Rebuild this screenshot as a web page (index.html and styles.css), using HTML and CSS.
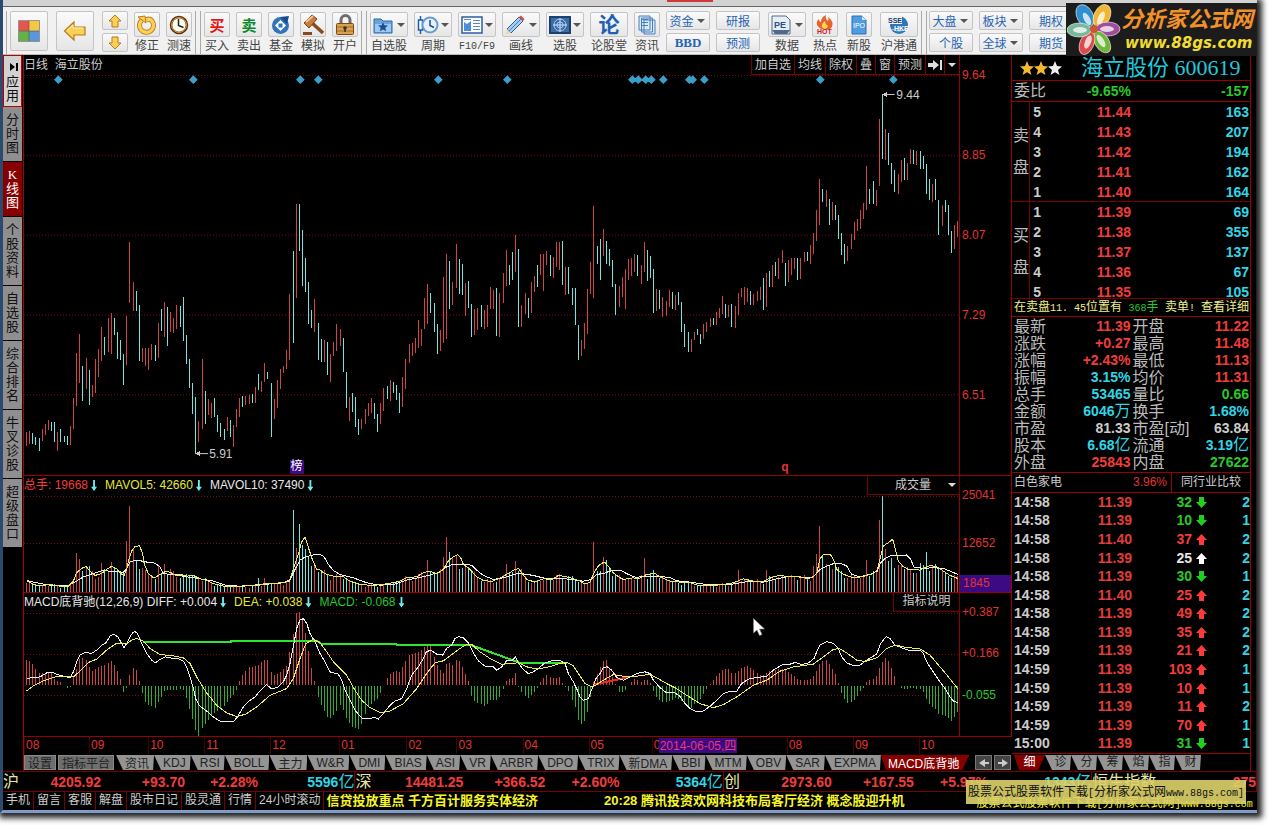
FILE: index.html
```html
<!DOCTYPE html>
<html lang="zh-CN">
<head>
<meta charset="utf-8">
<title>海立股份 600619</title>
<link rel="stylesheet" href="styles.css">
</head>
<body>
<div class="app">
<div class="titlestrip"><span class="redchip"></span></div>
<header class="toolbar">
  <div class="tgroup">
    <button class="big" aria-label="首页"><svg width="22" height="22" viewBox="0 0 22 22"><path fill="#e8554e" d="M1 1h10v10H1z"/><path fill="#f5c842" d="M11 1h10v10H11z"/><path fill="#62b246" d="M1 11h10v10H1z"/><path fill="#5a96dc" d="M11 11h10v10H11z"/><path fill="none" stroke="#555" stroke-opacity=".6" d="M.5 .5h21v21H.5zM11 1v20M1 11h20"/></svg></button>
    <button class="big" aria-label="返回"><svg width="24" height="22" viewBox="0 0 24 22"><path fill="#fbd056" stroke="#b9791c" stroke-width="1.2" d="M1.5 11 11 2v5h11v8H11v5z"/><path fill="none" stroke="#fff0b0" d="M4 10.500 10 5v3h10"/></svg></button>
    <div class="pair narrow">
      <button aria-label="上"><svg width="14" height="14" viewBox="0 0 14 14"><path fill="#fbd056" stroke="#b9791c" d="M7 1l6 6H10v6H4V7H1z"/></svg></button>
      <button aria-label="下"><svg width="14" height="14" viewBox="0 0 14 14"><path fill="#fbd056" stroke="#b9791c" d="M7 13l6-6H10V1H4v6H1z"/></svg></button>
    </div>
    <div class="tool"><button aria-labelledby="l1"><svg width="20" height="20" viewBox="0 0 20 20"><path fill="none" stroke="#b9791c" stroke-width="5" d="M5 5A7 7 0 1 0 15 6Q13 3 9 5"/><path fill="none" stroke="#fbd056" stroke-width="3.400" d="M5 5A7 7 0 1 0 15 6Q13 3 9 5"/><path fill="#fbd056" stroke="#b9791c" d="M1 2l7-1 1 7z"/></svg></button><span id="l1">修正</span></div>
    <div class="tool"><button aria-labelledby="l2"><svg width="20" height="20" viewBox="0 0 20 20"><circle cx="10" cy="10" r="8" fill="#fffdf2" stroke="#5a2f16" stroke-width="2.500"/><circle cx="10" cy="10" r="7.500" fill="none" stroke="#d8963a"/><path fill="none" stroke="#222" stroke-width="1.500" d="M9.500 4v6.500l5 2"/></svg></button><span id="l2">测速</span></div>
  </div>
  <div class="tgroup">
    <div class="tool"><button aria-labelledby="l3"><b class="buy">买</b></button><span id="l3">买入</span></div>
    <div class="tool"><button aria-labelledby="l4"><b class="sell">卖</b></button><span id="l4">卖出</span></div>
    <div class="tool"><button aria-labelledby="l5"><svg width="20" height="20" viewBox="0 0 20 20"><circle cx="9.500" cy="10.500" r="8.500" fill="#2f74bb"/><path fill="#174d8c" d="M9 2l9-1-2 8z"/><path fill="#fff" d="M9.500 5 15 10.500 9.500 16 4 10.500z"/><path fill="#2f74bb" d="M7.500 8.500h4v4h-4z"/></svg></button><span id="l5">基金</span></div>
    <div class="tool"><button aria-labelledby="l6"><svg width="22" height="22" viewBox="0 0 22 22"><path stroke="#8a4a20" stroke-width="3.500" d="M10 9l11 10"/><path fill="#c97c3c" stroke="#7c3d16" d="M2 9 10 1l5 4-8 9z"/><path stroke="#f0c79a" stroke-width="2" d="M4 8l7-6"/><path fill="#8a4a20" d="M1 18h9v3H1z"/></svg></button><span id="l6">模拟</span></div>
    <div class="tool"><button aria-labelledby="l7"><svg width="20" height="22" viewBox="0 0 20 22"><path fill="none" stroke="#6e6e6e" stroke-width="3" d="M6 10V6a4 4 0 0 1 9 0v5"/><rect x="1.500" y="9.500" width="17" height="11" rx="1" fill="#d9a050" stroke="#7a4a12"/><path stroke="#a66b25" d="M2 13h16M2 17h16"/><circle cx="10" cy="14" r="1.800" fill="#332"/><path stroke="#332" stroke-width="1.500" d="M10 14v4"/></svg></button><span id="l7">开户</span></div>
  </div>
  <div class="tgroup">
    <div class="tool split"><button aria-labelledby="l8"><svg width="20" height="18" viewBox="0 0 20 18"><path fill="#6aa5e0" stroke="#2c68ad" d="M1 3h7l2 2h9v12H1z"/><path fill="#9cc8f2" d="M2 8h16v8H2z"/><path fill="#1d4f8e" d="M10 6l1.400 3.200 3.600.3-2.700 2.300.9 3.400L10 13.400l-3.200 1.800.9-3.400L5 9.500l3.600-.3z"/></svg><i class="dd"></i></button><span id="l8">自选股</span></div>
    <div class="tool split"><button aria-labelledby="l9"><svg width="22" height="20" viewBox="0 0 22 20"><path fill="#fff" stroke="#1b5fae" stroke-width="1.500" d="M1.500 5h4v10h-4zM3.500 1v4M3.500 15v4"/><circle cx="13" cy="10" r="7.500" fill="#e8f2fc" stroke="#6b9cd0" stroke-width="2"/><path fill="none" stroke="#1b4f93" stroke-width="1.500" d="M13 5v5.500l4 2"/></svg><i class="dd"></i></button><span id="l9">周期</span></div>
    <div class="tool split"><button aria-labelledby="l10"><svg width="22" height="18" viewBox="0 0 22 18"><path fill="#fff" stroke="#2c5e9e" stroke-width="1.500" d="M1 1h20v16H1z"/><path fill="#4c8fd8" d="M3 6l3 2 4-3v10H3z"/><path stroke="#5d89bd" d="M3 3.500h7M12 4.500h7M12 7.500h7M12 10.500h7M12 13.500h7"/></svg><i class="dd"></i></button><span id="l10" class="lat">F10/F9</span></div>
    <div class="tool split"><button aria-labelledby="l11"><svg width="20" height="20" viewBox="0 0 20 20"><path fill="#a8cdf0" stroke="#2a5f9e" d="M2 14 14 2l4 4L6 18z"/><path fill="#e04b4b" d="M14 2l2-1.500L19.500 4 18 6z"/><path fill="#f2d9a8" d="M2 14l4 4-5.500 1.500z"/><path stroke="#4b7fb8" d="M4 16 16 4"/></svg><i class="dd"></i></button><span id="l11">画线</span></div>
    <div class="tool split"><button aria-labelledby="l12"><svg width="22" height="18" viewBox="0 0 22 18"><path fill="#3d6ba4" stroke="#1c3f70" stroke-width="2" d="M1 1h20v16H1z"/><circle cx="11" cy="9" r="6" fill="none" stroke="#a9cdf2"/><circle cx="11" cy="9" r="3" fill="none" stroke="#a9cdf2"/><path stroke="#cfe4fa" d="M11 2v14M4 9h14"/></svg><i class="dd"></i></button><span id="l12">选股</span></div>
    <div class="tool wide38"><button aria-labelledby="l13"><b class="lun">论</b></button><span id="l13">论股堂</span></div>
    <div class="tool"><button aria-labelledby="l14"><svg width="18" height="20" viewBox="0 0 18 20"><path fill="#d8e8f8" stroke="#4a7fb8" d="M6 5h11v14H6zM3.500 3h11v14h-11zM1 1h11v14H1z"/><path stroke="#4a7fb8" d="M3 4.500h7M3 7.500h7M3 10.500h7"/></svg></button><span id="l14">资讯</span></div>
    <div class="pair">
      <button>资金<i class="dd"></i></button>
      <button class="bbd">BBD</button>
    </div>
    <div class="pair"><button>研报</button><button>预测</button></div>
    <div class="tool split more"><button aria-labelledby="l15"><svg width="20" height="20" viewBox="0 0 20 20"><path fill="#e6edf5" stroke="#506a8c" d="M1 1h14l4 4v14H1z"/><path fill="#506a8c" d="M1 15h18l-3 4H4z"/><text x="3" y="13" class="petxt">PE</text></svg><i class="dd"></i></button><span id="l15">数据</span></div>
    <div class="tool"><button aria-labelledby="l16"><svg width="20" height="20" viewBox="0 0 20 20"><path fill="#e8632c" d="M2 10Q1 6 4 4q0 3 2 3 0-5 5-7-1 4 2 6 1-2 0-4 6 4 4 10-2 3-7 3-6-1-8-5z"/><path fill="#ffd25a" d="M7 12q-1-3 3-6 0 3 3 5-1 3-4 3z"/><text x="2" y="19" class="hottxt">HOT</text></svg></button><span id="l16">热点</span></div>
    <div class="tool more"><button aria-labelledby="l17"><svg width="16" height="20" viewBox="0 0 16 20"><path fill="#4f9de0" stroke="#2a6fb4" d="M1 1h10l4 4v14H1z"/><path fill="#d6eafc" d="M11 1v4h4z"/><text x="2" y="13" class="ipotxt">IPO</text></svg></button><span id="l17">新股</span></div>
    <div class="tool wide38 more"><button aria-labelledby="l18"><svg width="22" height="20" viewBox="0 0 22 20"><circle cx="11" cy="10" r="9" fill="#2f76b8"/><path fill="#f1f1f1" d="M0 1h14v8H0z"/><path fill="none" stroke="#a4cdee" d="M4 14q7 4 14 0"/><text x="0" y="8" class="ssetxt">SSE</text><text x="6" y="16" class="ssetxt w">HKE</text></svg></button><span id="l18">沪港通</span></div>
  </div>
  <div class="tgroup">
    <div class="pair"><button>大盘<i class="dd"></i></button><button>个股</button></div>
    <div class="pair"><button>板块<i class="dd"></i></button><button>全球<i class="dd"></i></button></div>
    <div class="pair"><button>期权</button><button>期货</button></div>
  </div>
  <div class="brand">
    <svg width="54" height="52" viewBox="0 0 54 52"><g stroke="#fff" stroke-opacity=".6">
      <ellipse cx="18" cy="12" rx="8" ry="12" fill="#2f8fd0" transform="rotate(-28 18 12)"/>
      <ellipse cx="35" cy="12" rx="8" ry="12" fill="#f2b632" transform="rotate(25 35 12)"/>
      <ellipse cx="41" cy="25" rx="12" ry="7" fill="#a04c9c"/>
      <ellipse cx="35" cy="38" rx="7" ry="12" fill="#72b53e" transform="rotate(-32 35 38)"/>
      <ellipse cx="20" cy="39" rx="7" ry="12" fill="#dc4a4a" transform="rotate(22 20 39)"/>
      <ellipse cx="12" cy="26" rx="12" ry="7" fill="#7bb89a"/></g>
      <g fill="#fff" fill-opacity=".75"><ellipse cx="20" cy="15" rx="3" ry="7" transform="rotate(-28 20 15)"/><ellipse cx="34" cy="14" rx="3" ry="7" transform="rotate(25 34 14)"/><ellipse cx="40" cy="25" rx="7" ry="3"/><ellipse cx="34" cy="37" rx="3" ry="7" transform="rotate(-32 34 37)"/><ellipse cx="21" cy="38" rx="3" ry="7" transform="rotate(22 21 38)"/><ellipse cx="13" cy="26" rx="7" ry="3"/></g>
      <circle cx="27" cy="25" r="4" fill="#c85a32"/></svg>
    <div class="brandtext"><span class="cn">分析家公式网</span><span class="url">www.88gs.com</span></div>
  </div>
</header>

<main class="main">
  <nav class="side">
    <button class="s0"><svg width="10" height="8" viewBox="0 0 10 8"><path d="M1 0l5 4-5 4zM7 0h2v8H7z"/></svg>应用</button>
    <button>分时图</button><button class="on">K线图</button><button>个股资料</button><button>自选股</button><button>综合排名</button><button>牛叉诊股</button><button>超级盘口</button>
  </nav>

  <section class="charts">
    <div class="chead"><span>日线&nbsp; 海立股份</span>
      <div class="cbtns"><button>加自选</button><button>均线</button><button>除权</button><button>叠</button><button>窗</button><button>预测</button><button aria-label="末尾"><svg width="14" height="12" viewBox="0 0 14 12"><path fill="#ddd" d="M0 4h5V1l6 5-6 5V8H0zM12 1h2v10h-2z"/></svg></button><button aria-label="更多"><i class="dd w"></i></button></div>
      <div class="axhead"></div></div>
    <div class="pane price">
      <div class="plot"><svg id="price" viewBox="72 75 2805 1203" preserveAspectRatio="none"></svg>
        <span class="note n944">9.44</span><span class="note n591">5.91</span><span class="bang">榜</span><b class="q">q</b></div>
      <div class="axis a5"><span>9.64</span><span>8.85</span><span>8.07</span><span>7.29</span><span>6.51</span></div>
    </div>
    <div class="phead"><div class="ptxt"><span class="r">总手: 19668<i class="dn"></i></span><span class="y">MAVOL5: 42660<i class="dn"></i></span><span class="w">MAVOL10: 37490<i class="dn"></i></span></div>
      <button class="pbtn vol">成交量<i class="dd w"></i></button><div class="axhead"></div></div>
    <div class="pane volume">
      <div class="plot"><svg id="volume" viewBox="72 78 2805 288" preserveAspectRatio="none"></svg></div>
      <div class="axis a2"><span>25041</span><span>12652</span><em>1845</em></div>
    </div>
    <div class="phead"><div class="ptxt"><span class="w">MACD底背驰(12,26,9) DIFF: +0.004<i class="dn"></i></span><span class="y">DEA: +0.038<i class="dn"></i></span><span class="g">MACD: -0.068<i class="dn"></i></span></div>
      <button class="pbtn">指标说明</button><div class="axhead"></div></div>
    <div class="pane macd">
      <div class="plot"><svg id="macd" viewBox="72 426 2805 372" preserveAspectRatio="none"></svg>
        <svg class="cursor" width="12" height="18" viewBox="0 0 12 18"><path fill="#fff" stroke="#888" stroke-width=".6" d="M.5.500v14.500l3.500-3 2.500 5.500 2.500-1L6.500 11h5z"/></svg></div>
      <div class="axis a3"><span>+0.387</span><span>+0.166</span><span class="g">-0.055</span></div>
    </div>
    <div class="dates"><span>08</span><span>09</span><span>10</span><span>11</span><span>12</span><span>01</span><span>02</span><span>03</span><span>04</span><span>05</span><span>0<em>2014-06-05,四</em></span><span>08</span><span>09</span><span>10</span></div>
    <div class="tabs"><button class="flat">设置</button><button class="flat">指标平台</button>
      <div class="tabset"><button>资讯</button><button>KDJ</button><button>RSI</button><button>BOLL</button><button>主力</button><button>W&amp;R</button><button>DMI</button><button>BIAS</button><button>ASI</button><button>VR</button><button>ARBR</button><button>DPO</button><button>TRIX</button><button>新DMA</button><button>BBI</button><button>MTM</button><button>OBV</button><button>SAR</button><button>EXPMA</button><button class="on">MACD底背驰</button></div>
      <div class="pager"><button aria-label="左"><svg width="10" height="8" viewBox="0 0 10 8"><path fill="#ccc" d="M0 4l6-4v3h4v2H6v3z"/></svg></button><button aria-label="右"><svg width="10" height="8" viewBox="0 0 10 8"><path fill="#ccc" d="M10 4L4 0v3H0v2h4v3z"/></svg></button></div></div>
  </section>

  <aside class="quote">
    <h1><svg width="42" height="14" viewBox="0 0 42 14"><path fill="#f5b92e" d="M7 0l2 5 5 .5-4 3.500 1.500 5L7 11.200 2.500 14 4 9 0 5.500 5 5z"/><path fill="#f5b92e" d="M21 0l2 5 5 .5-4 3.500 1.500 5-4.500-2.800-4.500 2.800L18 9l-4-3.500 5-.5z"/><path fill="#eee" d="M35 0l2 5 5 .5-4 3.500 1.500 5-4.500-2.800-4.500 2.800L32 9l-4-3.500 5-.5z"/></svg><span>海立股份 600619</span></h1>
    <div class="weibi"><span>委比</span><b>-9.65%</b><b>-157</b></div>
    <div class="book"><div class="lab">卖<br>盘</div><table id="asks"></table></div>
    <div class="book bids"><div class="lab">买<br>盘</div><table id="bids"></table></div>
    <div class="msg"><span>在卖盘<span class="lat">11. 45</span>位置有</span><span class="gd"><span class="lat">368</span>手</span><span>卖单<span class="lat">! </span>查看详细</span></div>
    <table class="stats"><tbody>
      <tr><th>最新</th><td class="r">11.39</td><th>开盘</th><td class="r">11.22</td></tr>
      <tr><th>涨跌</th><td class="r">+0.27</td><th>最高</th><td class="r">11.48</td></tr>
      <tr><th>涨幅</th><td class="r">+2.43%</td><th>最低</th><td class="r">11.13</td></tr>
      <tr><th>振幅</th><td class="c">3.15%</td><th>均价</th><td class="r">11.31</td></tr>
      <tr><th>总手</th><td class="c">53465</td><th>量比</th><td class="g">0.66</td></tr>
      <tr><th>金额</th><td class="c">6046<i>万</i></td><th>换手</th><td class="c">1.68%</td></tr>
      <tr><th>市盈</th><td class="w">81.33</td><th>市盈[动]</th><td class="w">63.84</td></tr>
      <tr><th>股本</th><td class="c">6.68<i>亿</i></td><th>流通</th><td class="c">3.19<i>亿</i></td></tr>
      <tr><th>外盘</th><td class="r">25843</td><th>内盘</th><td class="g">27622</td></tr>
    </tbody></table>
    <div class="ind"><span>白色家电</span><span class="pct">3.96%</span><button>同行业比较</button></div>
    <table class="ticks" id="ticks"></table>
    <div class="rtabs"><button class="on">细</button><button>诊</button><button>分</button><button>筹</button><button>焰</button><button>指</button><button>财</button></div>
  </aside>
</main>

<div class="indices">
  <div class="ix i1"><span>沪</span><b>4205.92</b><b>+93.70</b><b>+2.28%</b><b class="c">5596<i>亿</i></b></div>
  <div class="ix i2"><span>深</span><b>14481.25</b><b>+366.52</b><b>+2.60%</b><b class="c">5364<i>亿</i></b></div>
  <div class="ix i3"><span>创</span><b>2973.60</b><b>+167.55</b><b>+5.97%</b><b class="c">1343<i>亿</i></b></div>
  <div class="ix i4"><span>恒生指数</span><b>275</b></div>
</div>
<footer class="foot">
  <a href="#">手机</a><a href="#">留言</a><a href="#">客服</a><a href="#">解盘</a><a href="#">股市日记</a><a href="#">股灵通</a><a href="#">行情</a><a href="#">24小时滚动</a>
  <div class="news"><span class="n1">信贷投放重点 千方百计服务实体经济</span><span class="n2">20:28 腾讯投资欢网科技布局客厅经济 概念股迎升机</span><span class="n3">股票公式股票软件下载<span class="lat">[</span>分析家公式网<span class="lat">]www.88gs.com</span></span></div>
</footer>
<div class="tip">股票公式股票软件下载<span class="lat">[</span>分析家公式网<span class="lat">www.88gs.com]</span></div>
</div>
<script src="app.js"></script>
</body>
</html>
```
FILE: styles.css
```css
*{box-sizing:border-box}
html,body{height:100%}
body{margin:0;background:#fff;font:12px "Liberation Sans","Noto Sans CJK SC",sans-serif;color:#ccc}
button{font:inherit;color:inherit;margin:0;padding:0;border:0;background:none;border-radius:0;display:flex;align-items:center;justify-content:center;white-space:nowrap}
i,em{font-style:normal}
svg{display:block;flex:none}
.lat{font-family:"Liberation Mono",monospace;font-size:10px}
.r{color:#f23c3c}.c{color:#30d6e6}.g{color:#2bc72b}.y{color:#e6e63a}.w{color:#e6e6e6}
.app{position:relative;display:flex;flex-direction:column;height:calc(100vh - 12px);min-height:700px;margin-right:11px;background:#000;border-left:3px solid #2c4a6e;border-bottom:3px solid #7f9cc8;box-shadow:2px 2px 6px 3px #222}
.titlestrip{height:7px;flex:none;background:#d2d2d2;border-bottom:1px solid #666;padding-left:664px}
.redchip{display:block;width:46px;height:2px;background:#cc3a3a}
.toolbar{position:relative;height:48px;flex:none;display:flex;background:#f1f1f1;border-bottom:1px solid #bbb;padding:4px 0 0 3px;color:#444}
.tgroup{display:flex;gap:6px;padding:0 3px;border-right:1px solid #aaa;margin-right:4px;border-left:1px solid #aaa;flex:none}
.tgroup:nth-child(4){padding-left:2px;border-right:0}
.toolbar button{border:1px solid #c4c4c4;background:linear-gradient(#fafafa,#e6e6e6);border-radius:2px;color:#2764b4}
.big{width:38px;height:40px;margin-right:2px}
.tool{width:26px;display:flex;flex-direction:column;align-items:center}
.tool button{width:100%;height:25px;flex:none;margin-top:1px}
.tool span{white-space:nowrap;line-height:18px}
.tool .lat{line-height:19px}
.split,.wide38{width:38px}
.split button{justify-content:space-between;padding-left:2px}
.more{margin-left:2px}
.dd{display:inline-block;border:4px solid transparent;border-top-color:#555;border-bottom:0;margin:0 2px 0 3px}
.dd.w{border-top-color:#ddd}
.split .dd{margin:0 2px 0 0}
.pair{width:44px;display:flex;flex-direction:column;gap:3px}
.pair button{height:19px;width:100%}
.narrow{width:26px}
.toolbar .buy{color:#e01818;font-size:15px}.toolbar .sell{color:#0b8a2c;font-size:15px}
.lun{color:#1f5fb4;font-size:21px;line-height:20px}
.bbd{font-family:"Liberation Serif",serif;font-weight:bold;font-size:12px}
.toolbar .bbd{font:bold 13px "Liberation Serif",serif}
.petxt{font:bold 9px "Liberation Sans";fill:#2d4f80}
.hottxt{font:bold 7px "Liberation Sans";fill:#c81e1e}
.ipotxt{font:7px "Liberation Sans";fill:#fff}
.ssetxt{font:bold 7px "Liberation Sans";fill:#123c70}.ssetxt.w{fill:#fff}
.brand{position:absolute;right:0;top:-4px;width:191px;height:53px;background:#1c1c1c;display:flex;align-items:center;padding-left:1px}
.brandtext{display:flex;flex-direction:column;font-weight:bold;font-style:italic;white-space:nowrap}
.cn{font-size:22px;line-height:26px;color:#f0912a}
.url{font:italic bold 15px/20px "DejaVu Sans",sans-serif;color:#f0dc32;padding-left:4px}
.main{flex:1;min-height:0;display:flex}
.side{width:21px;flex:none;border-right:1px solid #a00;background:#000;color:#111;font-size:13px}
.side button{display:block;width:19px;padding:6px 3px;line-height:14px;border-bottom:1px solid #000;background:#8f8f8f;white-space:normal;word-break:break-all;text-align:center}
.side .s0{background:#d2d2d2;border:1px solid #b00;padding:5px 2px 3px}
.side .s0 svg{margin:2px 1px 4px 3px}
.side .on{background:#860000;color:#fff;font-family:"Liberation Serif","Noto Sans CJK SC",serif}
.charts{flex:1;min-width:0;display:flex;flex-direction:column}
.chead,.phead{display:flex;flex:none;height:20px;line-height:20px}
.chead>span,.ptxt{flex:1}
.cbtns{display:flex;height:20px;border-right:1px solid #900}
.cbtns button{border:1px solid #700;border-width:0 0 1px 1px;padding:0 3px;min-width:19px}
.cbtns button:nth-child(7){padding:0 2px}
.cbtns button:last-child{min-width:14px;padding:0}
.cbtns button:last-child i{margin:0 3px}
.axhead{width:52px;flex:none;border-right:1px solid #900}
.phead{height:19px;line-height:19px}
.ptxt{display:flex;gap:8px;white-space:nowrap}
.ptxt span{display:flex;align-items:center;color:#e6e6e6}
.ptxt .r{color:#f23c3c}.ptxt .y{color:#e6e63a}.ptxt .g{color:#2bc72b}
.dn{width:6px;height:11px;margin-left:3px;background:#6ef0f0;clip-path:polygon(35% 0,65% 0,65% 60%,100% 60%,50% 100%,0 60%,35% 60%)}
.pbtn{border:1px solid #700;border-width:0 1px 1px;width:67px;color:#ccc}
.vol{width:93px;justify-content:flex-end}
.vol .dd{margin:0 3px 0 17px}
.pane{display:flex;min-height:0;flex:402 1 0;border-bottom:1px solid #900}
.volume{flex-grow:97}
.macd{flex-grow:125}
.plot{position:relative;flex:1;min-width:0;border-right:1px solid #900}
.plot>svg:first-child{position:absolute;width:100%;height:100%;shape-rendering:crispEdges}
.axis{width:52px;flex:none;display:grid;border-right:1px solid #900;color:#e03434;line-height:20px;padding-left:2px}
.axis span{margin-top:-10px}
.a5{grid-template-rows:repeat(5,1fr)}
.a2{grid-template-rows:48fr 31fr 17px}
.a2 em{background:#3c0a82;margin-left:-2px;padding-left:3px;line-height:17px}
.a3{grid-template-rows:repeat(3,1fr)}
.axis .g{color:#2bc72b}
.note{position:absolute;line-height:14px}
.n944{left:93.3%;top:3.2%}.n591{left:19.8%;top:93%}
.bang{position:absolute;left:28.4%;bottom:1px;width:14px;height:14px;line-height:13px;text-align:center;background:#3c0a82;color:#fff}
.q{position:absolute;left:81%;bottom:1px;color:#e03434;line-height:14px}
.cursor{position:absolute;left:78%;top:5%}
.dates{height:17px;flex:none;display:grid;grid-template-columns:65fr 59fr 56fr 66fr 69fr 67fr 50fr 66fr 66fr 63fr 135fr 66fr 66fr 41fr;margin-right:52px;color:#e03434;line-height:17px}
.dates span{border-left:1px solid #400;padding-left:1px;position:relative;white-space:nowrap}
.dates em{position:absolute;left:6px;top:1px;height:15px;line-height:16px;background:#3c0a82;color:#e63c78;padding:0 1px}
.tabs{height:17px;flex:none;display:flex;gap:2px;padding:1px 1px 1px 0;color:#222}
.flat{background:#6e6e6e;padding:0 3px;border:1px solid #888}
.tabset{display:flex;flex:1;min-width:0}
.tabset button,.rtabs button{background:#949494;padding:0 5px 0 9px;clip-path:polygon(0 0,100% 0,calc(100% - 1px) 100%,7px 100%)}
.tabset .on,.rtabs .on{background:#860000;color:#fff;padding:0 10px 0 7px;clip-path:polygon(0 0,100% 0,calc(100% - 7px) 100%,5px 100%)}
.pager{display:flex;gap:2px}
.pager button{width:17px;background:#444;border:1px solid #777}
.quote{width:245px;flex:none;display:flex;flex-direction:column;font-size:16px;border-right:1px solid #222;padding-right:5px}
.quote>*{border-right:1px solid #900}
h1{margin:0;height:25px;flex:none;display:flex;align-items:center;gap:19px;padding-left:8px;font:22px "Liberation Serif","Noto Sans CJK SC",serif;line-height:24px;color:#22c8dc;white-space:nowrap}
.weibi{height:22px;flex:none;display:grid;grid-template-columns:36px 122px 1fr;padding:0 1px 0 2px;border-top:1px solid #900;border-bottom:1px solid #900;line-height:20px;color:#bbb}
.weibi b{color:#2bc72b;font-size:14px;text-align:right}
.weibi b:nth-child(2){padding-right:41px}
.book{display:flex;height:100px;flex:none;border-bottom:1px solid #700;color:#bbb}
.bids{height:97px;overflow:hidden}
.lab{width:18px;border-right:1px solid #700;line-height:32px;padding:18px 0 0 1px}
table{border-collapse:collapse;border-spacing:0}
td,th{padding:0;font-weight:normal}
.book table{flex:1;height:100px}
.book td{height:20px;line-height:20px;text-align:right;font-size:14px;font-weight:bold}
.book td:first-child{width:11px;color:#ccc}
.book td:nth-child(2){width:90px;color:#f23c3c}
.book td:nth-child(3){color:#30d6e6;padding-right:1px}
.msg{display:flex;justify-content:space-between;height:18px;flex:none;line-height:17px;font-size:12px;color:#f0f08c;padding:0 1px 0 2px;border-bottom:1px solid #900;white-space:nowrap}
.gd{color:#2bc72b}
.stats{flex:none;width:100%;table-layout:fixed;border-collapse:separate;padding:1px 1px 1px 2px;border-bottom:1px solid #900}
.stats th{text-align:left;width:36px;color:#bbb;line-height:17px;white-space:nowrap}
.stats th:nth-child(3){padding-left:2px;width:38px}
.stats td{text-align:right;line-height:17px;height:17px;font-size:14px;font-weight:bold}
.stats td i,.ix i{font-weight:normal;font-size:16px;line-height:16px}
.stats .w{color:#ccc}
.ind{display:flex;height:20px;flex:none;font-size:12px;line-height:19px;padding-left:2px;border-bottom:1px solid #900}
.ind .pct{flex:1;text-align:right;color:#e03434;padding-right:4px}
.ind button{width:79px;border-left:1px solid #900}
.ticks,.ticks tbody{display:flex;flex-direction:column;flex:1;min-height:0}
.ticks tr{flex:1;display:grid;grid-template-columns:44px 74px 60px 18px 1fr;align-items:center;padding:0 0 0 2px}
.ticks td{font-size:14px;line-height:17px;font-weight:bold;text-align:right}
.ticks td:first-child{text-align:left;color:#ccc}
.ticks td:nth-child(2){color:#e03c3c}
.ticks td:nth-child(4){display:flex;justify-content:flex-end;padding-right:3px}
.ticks td:nth-child(5){color:#30d6e6}
.rtabs{height:18px;flex:none;display:flex;padding:1px 0 1px 2px;font-size:12px;line-height:15px;color:#222;border-top:1px solid #900}
.rtabs button{width:26px;padding:0 1px 0 6px}
.rtabs .on{width:31px;padding:0}
.indices{height:21px;flex:none;display:flex;border:1px solid #700;border-width:1px 0}
.ix{display:grid;grid-template-columns:16px 82px 84px 73px 1fr;flex:366 1 0;line-height:20px;font-size:14px;border-right:1px solid #700;color:#f23c3c;white-space:nowrap}
.ix span{color:#e6e6a0;font-size:16px}
.ix b{text-align:right;font-size:14px}
.ix .c{color:#30d6e6}
.i1{flex-grow:350}
.i2,.i3{grid-template-columns:16px 92px 82px 74px 1fr}
.i4{flex-grow:163;grid-template-columns:70px 1fr}
.foot{height:18px;flex:none;display:flex;line-height:17px}
.foot a{color:#ccc;text-decoration:none;padding:0 3px;border-right:1px solid #700;white-space:nowrap;flex:none}
.news{display:flex;flex:1;min-width:0;overflow:hidden;padding-left:2px;color:#f5f528;font-weight:bold;font-size:13px;white-space:nowrap}
.n2{margin-left:66px}
.n3{margin-left:72px;font-size:12px;font-weight:normal;padding-top:5px;line-height:13px}
.tip{position:absolute;right:11px;bottom:6px;height:24px;width:280px;line-height:24px;padding-left:2px;background:#ddd36ae6;color:#111;white-space:nowrap}
```
FILE: app.js
```js
// Daily ranges: top, bottom in pane units; trailing "c" marks a falling day.
const DAYS = `1150-1190 1147-1185 1152-1185c 1163-1187c 1168-1205c 1140-1177 1125-1158 1113-1143 1118-1145c 1117-1180c 1150-1205 1140-1178c 1160-1178c 1160-1187c 1130-1188
1045-1140 912-1070 855-1000 950-1055c 925-1020 963-1067c 1007-1043 930-1030 900-983 833-935 862-917c 805-908 792-913 807-857c 847-930c 873-932c 915-1007c 800-948 578-760 698-785 725-785c
768-935c 897-937 897-950 897-962 885-932 887-935c 820-925 780-845c 757-862 772-890c 787-848 807-850 768-838 770-833c 743-875c 858-945c 930-1017c 1002-1095c 1042-1213c 1115-1178 930-1140 1025-1125c
1050-1098 1060-1105 1045-1103c 1098-1148c 1122-1165c 1140-1172c 1103-1145 1113-1163c 1127-1193 1078-1133 1045-1102 1040-1073c 1040-1068 1037-1065 1035-1060c 1012-1062 975-1022c 995-1028 942-998 968-990c 1000-1163c 1050-1110
993-1077 960-1018 950-970 903-960 735-933 605-880c 462-745 462-605c 540-710c 625-728c 698-823c 783-835c 750-848 820-932c 870-937c 873-937 878-977c
915-998 877-920 825-905 840-890 867-968c 968-1077c 1042-1115 1032-1088c 1043-1133c 1110-1158c 1110-1140 1078-1125 1060-1100 1045-1092 1060-1110c 1095-1148c 1062-1125 1015-1085 1010-1050c
992-1055 997-1032c 1008-1052c 1030-1090c 983-1073 930-1020 885-940 880-920 867-912 813-897 840-890 747-840 702-823 730-790c 760-848c 825-915c 843-905 682-880 613-870 633-780c 698-767 582-717
627-733c 642-738c 700-800 693-777c 765-863c 778-857 777-843 768-833c 783-838 767-833 711-780 722-780 714-860c 732-863 670-760 600-710 645-707c 608-690c 557-668 597-833c 767-833 732-795
747-807c 698-790 680-728 645-713c 612-677 612-725 603-645 615-680c 622-684 578-653 578-660 573-707c 652-738 652-735c 717-768c 714-827c 828-933c 873-920 820-898 720-855 636-735 470-747
588-642c 567-692c 538-620 573-642c 597-648c 630-711c 702-797c 708-773 682-743 657-780 627-690 624-678 612-668 615-678c 645-704 578-668 600-695c
618-684c 657-792c 720-785 723-780c 743-803 755-800 723-773 729-780c 738-782 729-768c 757-848c 825-893c 848-908c 870-908 847-872 840-858c 855-885c 825-868 817-847
807-832 807-827c 787-827 777-805 741-793 765-806c 768-803 763-833c 771-837 732-798 714-743 711-768 717-758 726-768c 735-768 726-755 712-753 684-782c 669-773 663-713c 645-711 636-678c
625-687 600-640 639-710c 630-698 625-675 625-657 625-690c 625-687 607-637 607-633c 585-642 549-612 480-575 387-525 417-458c 420-473 447-527c 456-510 465-510c 495-567c 549-615c 582-642c
588-635 552-597 516-570 507-545 480-537 459-508 348-480 417-462c 393-462c 420-470 207-410 132-327c 238-332 249-345c 339-402c 360-428c 372-432 330-396 324-390c 339-390 297-342
300-342c 303-345 303-357c 320-357c 342-432c 387-450c 402-456 387-450c 450-557c 465-530 450-488c 465-557c 543-609c 525-597 514-563`.trim().split(/\s+/).map(s => {
  const [a, b] = s.split('-');
  return { top: +a, bottom: parseInt(b, 10), down: s.endsWith('c') };
});

// "x,y x,y" text with an x offset for each third of the time line.
const pts = (a, b, c) => [[a, 0], [b, 960], [c, 1920]].flatMap(([s, o]) =>
  s.trim().split(/\s+/).map(p => { const [x, y] = p.split(',').map(Number); return [x + o, y]; }));

const VOL5 = pts(`80,333 100,345 120,349 150,345 180,350 205,350 220,335 230,310 245,297 258,291 270,305 285,318 305,312 320,300 335,291 350,298 365,315 372,318 380,300 387,268 395,245 405,232 419,229 428,255 433,285 445,312 462,326 480,315 495,307 510,308 525,317 545,316 560,320 580,318 600,328 620,333 640,342 670,350 710,352 740,349 770,349 800,341 820,341 850,340 868,335 880,300 895,255 905,218 915,204 922,225 935,265 950,300`,
`0,302 15,313 40,320 70,322 90,335 120,345 160,348 200,343 240,335 260,325 290,322 310,310 330,305 350,313 370,300 385,275 400,262 412,256 422,265 430,285 450,300 470,322 490,333 515,336 540,326 560,315 580,303 595,297 605,310 620,330 645,338 670,328 695,330 715,318 740,322 760,328 780,335 795,344 810,338 822,310 835,290 845,282 855,278 868,295 880,310 895,322 910,330 940,325 950,328`,
`0,326 20,315 45,312 60,322 90,335 120,338 150,340 180,349 210,349 250,345 280,340 310,328 340,335 370,335 400,322 420,318 450,322 470,320 500,327 515,325 530,312 540,268 550,256 572,257 580,270 590,300 605,312 620,318 640,325 665,322 680,318 700,312 712,300 722,262 730,230 745,220 758,210 765,235 775,275 790,292 805,300 840,302 870,288 890,292 910,305 930,318 953,327`);
const VOL10 = pts(`80,333 110,340 150,347 205,348 225,338 250,322 280,312 310,303 340,307 370,308 380,298 390,278 410,272 440,278 460,280 478,290 490,313 520,315 560,322 600,328 640,335 680,348 720,350 760,347 800,344 850,340 870,330 885,300 900,272 918,262 945,256`,
`0,256 12,262 25,285 40,303 60,315 100,325 140,340 180,347 220,345 260,332 310,322 360,308 375,295 395,286 420,286 455,287 470,302 490,318 520,330 550,325 580,315 600,312 640,318 680,328 730,327 790,335 815,330 830,315 850,312 880,302 900,302 925,315 950,325`,
`0,322 20,320 60,320 95,326 110,334 150,338 200,345 270,345 330,335 370,338 410,328 450,320 500,325 520,322 540,300 560,290 580,283 605,283 620,290 635,315 660,322 690,315 712,305 722,280 735,268 755,258 800,257 812,270 822,293 850,297 880,295 910,297 930,305 953,315`);
const SPIKES = pts(`230,252 239,268 305,280 332,277 380,216 389,110 398,240 407,275 419,300 473,290 494,285 776,326 794,327 878,122 887,235 899,165 908,228 917,240 926,260`,
`323,272 371,262 380,204 389,248 398,265 407,260 560,285 587,276 821,218 851,262`,
`14,267 296,303 380,303 521,290 530,255 539,170 551,256 680,273 719,152 728,82 737,240 758,265 842,280 860,248`);
const DIFF = pts(`80,625 100,622 120,620 140,608 155,606 170,612 190,618 210,622 220,605 232,570 240,555 255,547 275,550 290,540 305,525 318,518 330,498 342,492 355,502 362,515 372,533 380,520 390,500 398,488 405,485 412,490 420,508 430,530 440,550 455,570 466,578 480,568 495,560 520,565 540,567 552,575 562,595 572,625 580,655 588,688 600,708 620,722 640,740 660,752 680,752 700,754 712,740 730,710 750,690 765,680 780,662 800,643 815,656 835,650 850,635 860,615 870,580 880,530 890,475 900,450 910,446 920,460 930,490 945,515`,
`0,550 15,575 30,605 55,612 65,630 75,660 90,690 105,720 125,743 140,745 165,742 175,746 190,730 210,705 225,692 245,685 260,655 275,615 295,590 310,565 320,543 335,542 350,552 368,555 380,535 395,525 405,505 415,500 430,503 445,518 460,548 475,572 495,588 520,590 530,600 545,590 560,572 575,572 587,560 595,578 610,598 625,610 640,605 655,595 675,578 695,572 718,570 735,580 745,610 760,635 772,660 780,680 790,690 805,685 815,658 828,625 840,610 850,592 862,590 875,600 890,622 910,630 930,620 950,610`,
`0,608 15,605 30,610 40,630 60,652 80,668 105,668 120,678 135,700 150,715 170,724 190,722 210,708 230,690 250,670 270,663 290,663 305,640 325,627 350,622 380,618 400,600 430,582 450,582 465,577 485,583 505,578 522,565 530,545 540,525 560,515 580,520 595,535 605,560 620,578 640,586 660,585 680,570 710,552 722,520 738,500 750,505 765,525 785,533 805,540 840,540 850,550 860,575 880,605 900,635 915,655 930,680 940,692 953,697`);
const DEA = pts(`80,662 100,647 130,632 165,620 220,620 240,603 265,577 290,567 320,540 345,522 365,518 378,522 395,510 410,505 430,513 450,535 480,553 520,557 550,563 570,580 590,620 620,668 650,705 680,728 712,739 740,730 770,710 810,675 860,655 880,625 900,565 918,520 940,508`,
`0,518 20,545 40,575 60,595 80,615 105,660 125,690 150,712 180,727 210,722 250,700 290,655 320,610 345,578 370,572 410,542 435,525 455,523 480,545 510,565 545,582 580,580 595,577 620,590 650,596 680,592 720,580 740,577 760,587 775,610 795,640 815,650 830,643 850,630 880,613 920,620`,
`0,617 30,612 50,623 80,640 110,655 140,675 180,700 220,712 250,703 290,680 340,645 380,630 420,603 460,590 520,582 550,560 580,538 597,535 620,548 650,570 675,574 712,562 740,535 765,525 800,532 840,536 870,555 900,590 925,620 953,655`);
const HIST = pts(`80,76 89,72 98,60 107,45 116,38 146,38 155,35 164,15 182,8 191,2 200,-5 209,-2 215,5 221,35 230,52 239,85 257,78 266,58 275,42 287,50 305,60 323,65 332,72 341,62 353,38 362,12 371,-27 380,0 389,38 398,52 407,50 419,5 428,-28 437,-52 455,-60 464,-68 473,-50 485,-30 494,-8 512,-12 530,-10 548,-8 560,-40 569,-75 578,-105 587,-140 596,-150 605,-125 614,-115 626,-98 635,-85 650,-75 671,-60 690,-35 701,-25 710,-8 719,20 728,35 746,55 767,58 794,75 803,74 812,42 821,30 833,35 851,50 860,60 869,110 878,145 887,215 899,220 908,195 917,145 926,90 935,40 944,5 950,-20`,
`5,-62 23,-95 32,-95 41,-85 59,-55 68,-70 80,-100 98,-125 116,-127 130,-100 140,-68 155,-50 173,-35 182,-15 191,5 200,20 212,38 230,45 239,40 257,75 266,90 287,95 305,105 323,125 332,118 341,85 353,55 371,35 380,72 398,60 407,75 419,70 428,50 437,30 446,8 453,-28 464,-48 485,-55 494,-60 512,-40 530,-42 545,-20 551,0 560,15 578,22 587,40 592,5 598,-12 610,-25 626,-35 640,-20 653,-3 662,12 675,32 700,22 719,25 725,8 737,-3 746,-18 758,-45 767,-68 776,-110 785,-115 794,-100 803,-70 812,-20 821,20 833,35 842,60 851,75 860,75 869,45 878,20 887,-2 899,-20 908,-18 917,-8 926,5 935,10 944,20`,
`0,10 18,18 30,8 36,-8 45,-28 60,-45 80,-48 95,-42 107,-32 125,-45 137,-55 150,-68 160,-55 175,-45 185,-30 195,-10 205,-2 215,10 230,32 245,45 265,50 275,35 290,40 305,55 320,58 335,48 350,38 365,28 380,40 395,45 430,50 445,40 460,30 475,15 490,15 505,18 515,22 530,45 540,72 560,75 575,50 590,25 596,-2 605,-25 615,-45 626,-52 640,-45 650,-30 660,-15 672,-2 680,15 700,20 710,30 719,60 737,82 746,68 758,40 767,12 776,-2 790,-8 815,-5 840,-8 851,-20 860,-45 875,-60 887,-70 899,-90 910,-85 935,-105 944,-90 953,-75`);

const PITCH = 9.406;
const left = i => 78 + Math.round(i * PITCH / 3) * 3;
const at = (line, x) => {
  for (let k = 1; k < line.length; k++) {
    const [x0, y0] = line[k - 1], [x1, y1] = line[k];
    if (x <= x1) return y0 + (y1 - y0) * Math.max(0, x - x0) / (x1 - x0);
  }
  return line[line.length - 1][1];
};
const bar = (x, a, b) => `M${x} ${a}h3V${b}h-3z`;
const path = (d, c) => `<path fill="${c}" d="${d}"/>`;
const line = (p, c, w = 3) => `<polyline fill="none" stroke="${c}" stroke-width="${w}" points="${p.map(q => q.join()).join(' ')}"/>`;
const grid = ys => ys.map(y => `<path stroke="#7a0c0c" stroke-width="3" stroke-dasharray="3 6" d="M72 ${y}H2877"/>`).join('');
const RED = '#cf4444', CYAN = '#74e4e0';

let up = '', dn = '';
DAYS.forEach((d, i) => { const s = bar(left(i), d.top, d.bottom); d.down ? dn += s : up += s; });
const marks = [175, 580, 901, 955, 1315, 1522, 1897, 1915, 1937, 1954, 1990, 2068, 2078, 2113, 2461, 2680]
  .map(x => `M${x - 13} 89l13-13 13 13-13 13z`).join('');
document.getElementById('price').innerHTML = grid([76.5, 316.5, 556.5, 796.5, 1036.5]) + path(up, RED) + path(dn, CYAN) +
  `<path fill="#3a9ec8" shape-rendering="auto" d="${marks}"/>` +
  `<path stroke="#ccc" stroke-width="3" d="M2648 133.500h36M588 1213.500h36"/>` + path('M2646 133l14-7v14zM586 1213l14-7v14z', '#ccc');

up = dn = '';
const spikes = new Map(SPIKES.map(([x, y]) => [Math.round((x - 80) / PITCH), y]));
DAYS.forEach((d, i) => {
  const wave = .78 + .3 * Math.abs(Math.sin(i * 2.3)) + .12 * Math.sin(i * 5.1);
  const base = Math.min(366 - at(VOL5, left(i)), 80);
  const top = Math.round(spikes.get(i) ?? 366 - base * wave);
  d.down ? dn += bar(left(i), top, 366) : up += bar(left(i), top, 366);
});
document.getElementById('volume').innerHTML = grid([82.5, 223.5]) + path(up, RED) + path(dn, CYAN) + line(VOL10, '#f0f0f0') + line(VOL5, '#ecec50');

up = dn = '';
DAYS.forEach((d, i) => {
  const v = Math.round(at(HIST, left(i)));
  v >= 0 ? up += bar(left(i), 645 - v, 645) : dn += bar(left(i), 648, 648 - v);
});
document.getElementById('macd').innerHTML = grid([430.5, 553.5, 676.5]) + path(up, RED) + path(dn, '#2fae2f') +
  line([[430, 516], [693, 516], [694, 513], [950, 512], [965, 521], [1188, 522], [1189, 524], [1413, 525], [1560, 578], [1700, 578]], '#2ee62e', 6) +
  line([[1780, 643], [1890, 620]], '#f02828', 6) + line(DIFF, '#f0f0f0') + line(DEA, '#ecec50');

const rows = (id, list) => { document.getElementById(id).innerHTML = '<tbody>' + list.map(r => '<tr>' + r.map(c => `<td>${c}</td>`).join('') + '</tr>').join('') + '</tbody>'; };
rows('asks', [[5, '11.44', 163], [4, '11.43', 207], [3, '11.42', 194], [2, '11.41', 162], [1, '11.40', 164]]);
rows('bids', [[1, '11.39', 69], [2, '11.38', 355], [3, '11.37', 137], [4, '11.36', 67], [5, '11.35', 105]]);
const tone = { d: 'g', u: 'r', w: 'w' }, ink = { d: '#1fd01f', u: '#ff3a3a', w: '#fff' };
rows('ticks', `14:58 11.39 32 d 2|14:58 11.39 10 d 1|14:58 11.40 37 u 2|14:58 11.39 25 w 2|14:58 11.39 30 d 1|14:58 11.40 25 u 2|14:58 11.39 49 u 2|14:58 11.39 35 u 2|14:59 11.39 21 u 2|14:59 11.39 103 u 1|14:59 11.39 10 u 1|14:59 11.39 11 u 2|14:59 11.39 70 u 1|15:00 11.39 31 d 1`
  .split('|').map(s => {
    const [t, p, n, k, m] = s.split(' ');
    const shape = k === 'd' ? 'M3 0h5v5h3L5.500 11 0 5h3z' : 'M3 11h5V6h3L5.500 0 0 6h3z';
    return [t, p, `<span class="${tone[k]}">${n}</span>`, `<svg width="11" height="11" viewBox="0 0 11 11"><path fill="${ink[k]}" d="${shape}"/></svg>`, m];
  }));
```
